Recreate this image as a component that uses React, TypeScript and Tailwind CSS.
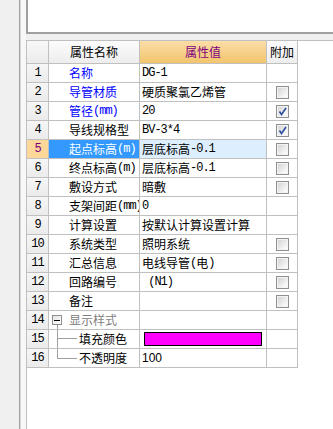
import type { ReactNode } from "react";

type Row = {
  n: number;
  name?: string;
  value?: string;
  blue?: boolean;
  cb?: boolean | null;
  sel?: boolean;
  kind?: "group" | "tree" | "treeLast";
  color?: string;
};

const ROWS: Row[] = [
  { n: 1, name: "名称", blue: true, value: "DG-1", cb: null },
  { n: 2, name: "导管材质", blue: true, value: "硬质聚氯乙烯管", cb: false },
  { n: 3, name: "管径(mm)", blue: true, value: "20", cb: true },
  { n: 4, name: "导线规格型", value: "BV-3*4", cb: true },
  { n: 5, name: "起点标高(m)", value: "层底标高-0.1", cb: false, sel: true },
  { n: 6, name: "终点标高(m)", value: "层底标高-0.1", cb: false },
  { n: 7, name: "敷设方式", value: "暗敷", cb: false },
  { n: 8, name: "支架间距(mm)", value: "0", cb: null },
  { n: 9, name: "计算设置", value: "按默认计算设置计算", cb: null },
  { n: 10, name: "系统类型", value: "照明系统", cb: false },
  { n: 11, name: "汇总信息", value: "电线导管(电)", cb: false },
  { n: 12, name: "回路编号", value: " (N1)", cb: false },
  { n: 13, name: "备注", value: "", cb: false },
  { n: 14, name: "显示样式", kind: "group", cb: null },
  { n: 15, name: "填充颜色", kind: "tree", color: "#ff00ff", cb: null },
  { n: 16, name: "不透明度", kind: "treeLast", value: "100", cb: null },
];

// half-width runs get a narrow mono face, like the old bitmap font
function Mixed({ text }: { text: string }) {
  const parts = text.match(/[\x20-\x7e]+|[^\x20-\x7e]+/g) ?? [];
  return (
    <>
      {parts.map((p, i) =>
        /^[\x20-\x7e]/.test(p) ? (
          <span key={i} className="font-['Liberation_Mono',monospace] text-[12px] tracking-[-1px]">
            {p}
          </span>
        ) : (
          <span key={i}>{p}</span>
        )
      )}
    </>
  );
}

function CheckBox({ checked }: { checked: boolean }) {
  return (
    <svg width="13" height="13" viewBox="0 0 13 13">
      <defs>
        <linearGradient id="cbfill" x1="0" y1="0" x2="1" y2="1">
          <stop offset="0" stopColor="#d4d4d4" />
          <stop offset="1" stopColor="#ffffff" />
        </linearGradient>
      </defs>
      <rect x="0.5" y="0.5" width="12" height="12" fill="#f4f4f4" stroke="#8e8f8f" />
      <rect x="2" y="2" width="9" height="9" fill="url(#cbfill)" />
      {checked && (
        <path d="M3.5 6.5 L5.5 9.5 L10 3" fill="none" stroke="#2d4f9e" strokeWidth="1.6" />
      )}
    </svg>
  );
}

function Cell({ className = "", children }: { className?: string; children?: ReactNode }) {
  return (
    <div className={"h-[19px] border-r border-b border-[#c0c0c0] flex items-center overflow-hidden whitespace-pre " + className}>
      {children}
    </div>
  );
}

export default function App() {
  return (
    <div className="w-[333px] h-[429px] flex bg-[#f0f0f0] overflow-hidden font-['Noto_Sans_CJK_SC',sans-serif] text-[12px] text-black leading-none">
      <div className="w-[19px] shrink-0" />
      <div className="w-[1px] shrink-0 bg-[#a0a0a0]" />
      <div className="w-[1px] shrink-0 bg-[#d8d8d8]" />
      <div className="w-[5px] shrink-0 bg-[#f7f7f7]" />
      <div className="flex-1 flex flex-col min-w-0">
        <div className="h-[34px] shrink-0 bg-white border-l-2 border-b-2 border-[#a0a0a0]" />
        <div className="h-[6px] shrink-0" />
        <div className="flex-1 bg-white border-l border-t border-[#c0c0c0]">
          <div className="grid grid-cols-[22px_91px_127px_31px] w-fit">
            {/* header */}
            <div className="h-[23px] border-r border-b border-[#c0c0c0] bg-linear-to-b from-[#f8f8f8] to-[#ebebeb]" />
            <div className="h-[23px] border-r border-b border-[#c0c0c0] bg-linear-to-b from-[#fcfcfc] to-[#ededed] flex items-center justify-center">
              属性名称
            </div>
            <div className="h-[23px] border-r border-b border-[#c0c0c0] bg-linear-to-b from-[#fbdda6] to-[#f2c46c] flex items-center justify-center text-[#800080]">
              属性值
            </div>
            <div className="h-[23px] border-r border-b border-[#c0c0c0] bg-linear-to-b from-[#fcfcfc] to-[#ededed] flex items-center justify-center">
              附加
            </div>

            {ROWS.map((r) => (
              <div key={r.n} className="contents">
                <Cell
                  className={
                    "justify-center font-['Liberation_Mono',monospace] text-[12px] tracking-[-1px] " +
                    (r.sel ? "bg-[#fcd79a] text-[#800080]" : "bg-linear-to-b from-[#f6f6f6] to-[#ebebeb]")
                  }
                >
                  {r.n}
                </Cell>

                <Cell
                  className={
                    "relative " +
                    (r.kind === "tree" || r.kind === "treeLast" ? "pl-[30px] " : "pl-[20px] ") +
                    (r.sel ? "bg-[#3399ff] text-white" : r.blue ? "text-[#0000ff]" : r.kind === "group" ? "text-[#808080]" : "")
                  }
                >
                  {r.kind === "group" && (
                    <>
                      <span className="absolute left-[3px] top-[4px] w-[10px] h-[10px] border border-[#8e8f8f] bg-linear-to-br from-[#e4e4e4] to-white flex items-center justify-center">
                        <span className="w-[6px] h-[1px] bg-black" />
                      </span>
                      <span className="absolute left-[8px] top-[14px] bottom-0 w-[1px] bg-[#a0a0a0]" />
                    </>
                  )}
                  {r.kind === "tree" && (
                    <>
                      <span className="absolute left-[8px] top-0 bottom-0 w-[1px] bg-[#a0a0a0]" />
                      <span className="absolute left-[8px] top-[8px] w-[20px] h-[1px] bg-[#a0a0a0]" />
                    </>
                  )}
                  {r.kind === "treeLast" && (
                    <>
                      <span className="absolute left-[8px] top-0 h-[9px] w-[1px] bg-[#a0a0a0]" />
                      <span className="absolute left-[8px] top-[9px] w-[20px] h-[1px] bg-[#a0a0a0]" />
                    </>
                  )}
                  <Mixed text={r.name ?? ""} />
                </Cell>

                <Cell className={"pl-[2px] " + (r.sel ? "bg-[#ddeeff]" : "")}>
                  {r.color ? (
                    <span className="ml-[2px] w-[118px] h-[14px] border border-black bg-[#ff00ff]" />
                  ) : r.kind === "treeLast" ? (
                    <span className="font-['Liberation_Sans',sans-serif] text-[12px]">{r.value}</span>
                  ) : (
                    <Mixed text={r.value ?? ""} />
                  )}
                </Cell>

                <Cell className="justify-center">
                  {r.cb !== null && r.cb !== undefined && <CheckBox checked={r.cb} />}
                </Cell>
              </div>
            ))}
          </div>
        </div>
      </div>
    </div>
  );
}
